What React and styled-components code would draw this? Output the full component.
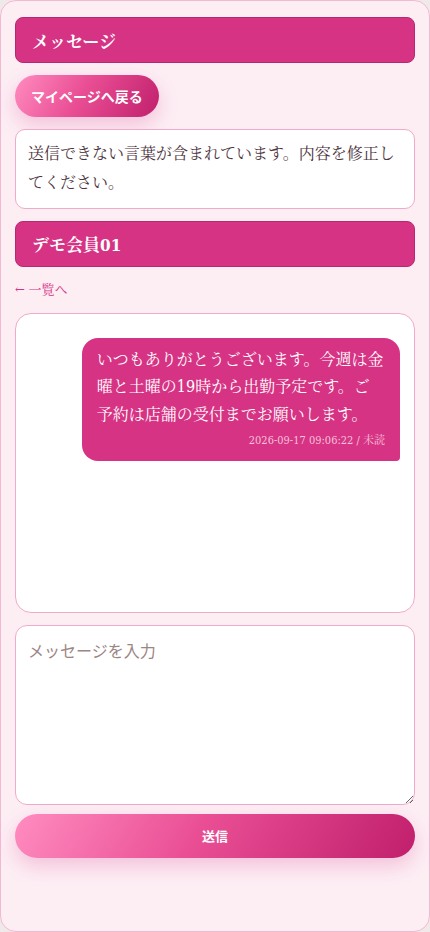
import React from "react";
import styled, { createGlobalStyle } from "styled-components";

const GlobalStyle = createGlobalStyle`
  html, body {
    margin: 0;
    padding: 0;
    background: #efe9ea;
  }
  body {
    font-family: "DejaVu Serif Condensed", "Noto Serif CJK JP", "Liberation Serif", serif;
    color: #4e3440;
  }
  * {
    box-sizing: border-box;
  }
`;

const Page = styled.div`
  min-height: 932px;
  border: 1px solid #f4b8d1;
  border-radius: 16px;
  background: #fdeef4;
  padding: 16px 14px 40px;
  display: flex;
  flex-direction: column;
`;

const TitleBar = styled.h1`
  margin: 0;
  height: 46px;
  display: flex;
  align-items: center;
  padding: 0 16px;
  background: #d63384;
  border: 1px solid #b8286f;
  border-radius: 8px;
  color: #fff;
  font-size: 17px;
  font-weight: 700;
`;

const PillButton = styled.button`
  height: ${p => (p.$wide ? "44px" : "42px")};
  width: ${p => (p.$wide ? "100%" : "auto")};
  align-self: ${p => (p.$wide ? "stretch" : "flex-start")};
  padding: 0 16px;
  border: none;
  border-radius: 999px;
  background: linear-gradient(120deg, #ff8cc0 0%, #ea4f95 45%, #c01f6c 100%);
  color: #fff;
  font-family: "Noto Sans CJK JP", "Noto Sans", sans-serif;
  font-size: ${p => (p.$wide ? "13px" : "14px")};
  font-weight: 700;
  box-shadow: 0 8px 20px rgba(214, 51, 132, 0.24);
  cursor: pointer;
`;

const Notice = styled.div`
  background: #fff;
  border: 1px solid #f1aac8;
  border-radius: 10px;
  padding: 10px 12px;
  font-size: 16px;
  line-height: 1.8;
  color: #4e3440;
`;

const BackLink = styled.a`
  color: #d63384;
  font-size: 13px;
  line-height: 22px;
  text-decoration: none;
`;

const ChatBox = styled.div`
  height: 300px;
  background: #fff;
  border: 1px solid #f1aac8;
  border-radius: 16px;
  padding: 24px 14px;
  display: flex;
  flex-direction: column;
  overflow-y: auto;
`;

const Bubble = styled.div`
  align-self: ${p => (p.$mine ? "flex-end" : "flex-start")};
  max-width: 86%;
  background: ${p => (p.$mine ? "#d63384" : "#fbe3ee")};
  color: ${p => (p.$mine ? "#fff" : "#4e3440")};
  border-radius: ${p => (p.$mine ? "16px 16px 4px 16px" : "16px 16px 16px 4px")};
  padding: 8px 15px 12px;
`;

const BubbleText = styled.p`
  margin: 0;
  font-size: 16px;
  line-height: 1.72;
`;

const Meta = styled.div`
  margin-top: 5px;
  text-align: right;
  font-size: 11px;
  line-height: 16px;
  color: #f6c1da;
`;

const Form = styled.form`
  display: flex;
  flex-direction: column;
  gap: 9px;
`;

const Input = styled.textarea`
  display: block;
  width: 100%;
  height: 180px;
  background: #fff;
  border: 1px solid #f1aac8;
  border-radius: 12px;
  padding: 12px;
  font-family: "Noto Sans CJK JP", "Noto Sans", sans-serif;
  font-size: 16px;
  color: #4e3440;
  outline: none;

  &::placeholder {
    color: #9c8585;
  }
`;

const Stack = styled.div`
  display: flex;
  flex-direction: column;
  gap: 12px;
`;

const messages = [
  {
    id: 1,
    mine: true,
    text: "いつもありがとうございます。今週は金曜と土曜の19時から出勤予定です。ご予約は店舗の受付までお願いします。",
    time: "2026-09-17 09:06:22",
    status: "未読",
  },
];

export default function App() {
  return (
    <>
      <GlobalStyle />
      <Page>
        <Stack>
          <TitleBar>メッセージ</TitleBar>
          <PillButton type="button">マイページへ戻る</PillButton>
          <Notice>送信できない言葉が含まれています。内容を修正してください。</Notice>
          <TitleBar>デモ会員01</TitleBar>
          <BackLink href="#">← 一覧へ</BackLink>
          <ChatBox>
            {messages.map(m => (
              <Bubble key={m.id} $mine={m.mine}>
                <BubbleText>{m.text}</BubbleText>
                <Meta>
                  {m.time} / {m.status}
                </Meta>
              </Bubble>
            ))}
          </ChatBox>
          <Form onSubmit={e => e.preventDefault()}>
            <Input placeholder="メッセージを入力" />
            <PillButton type="submit" $wide>
              送信
            </PillButton>
          </Form>
        </Stack>
      </Page>
    </>
  );
}
